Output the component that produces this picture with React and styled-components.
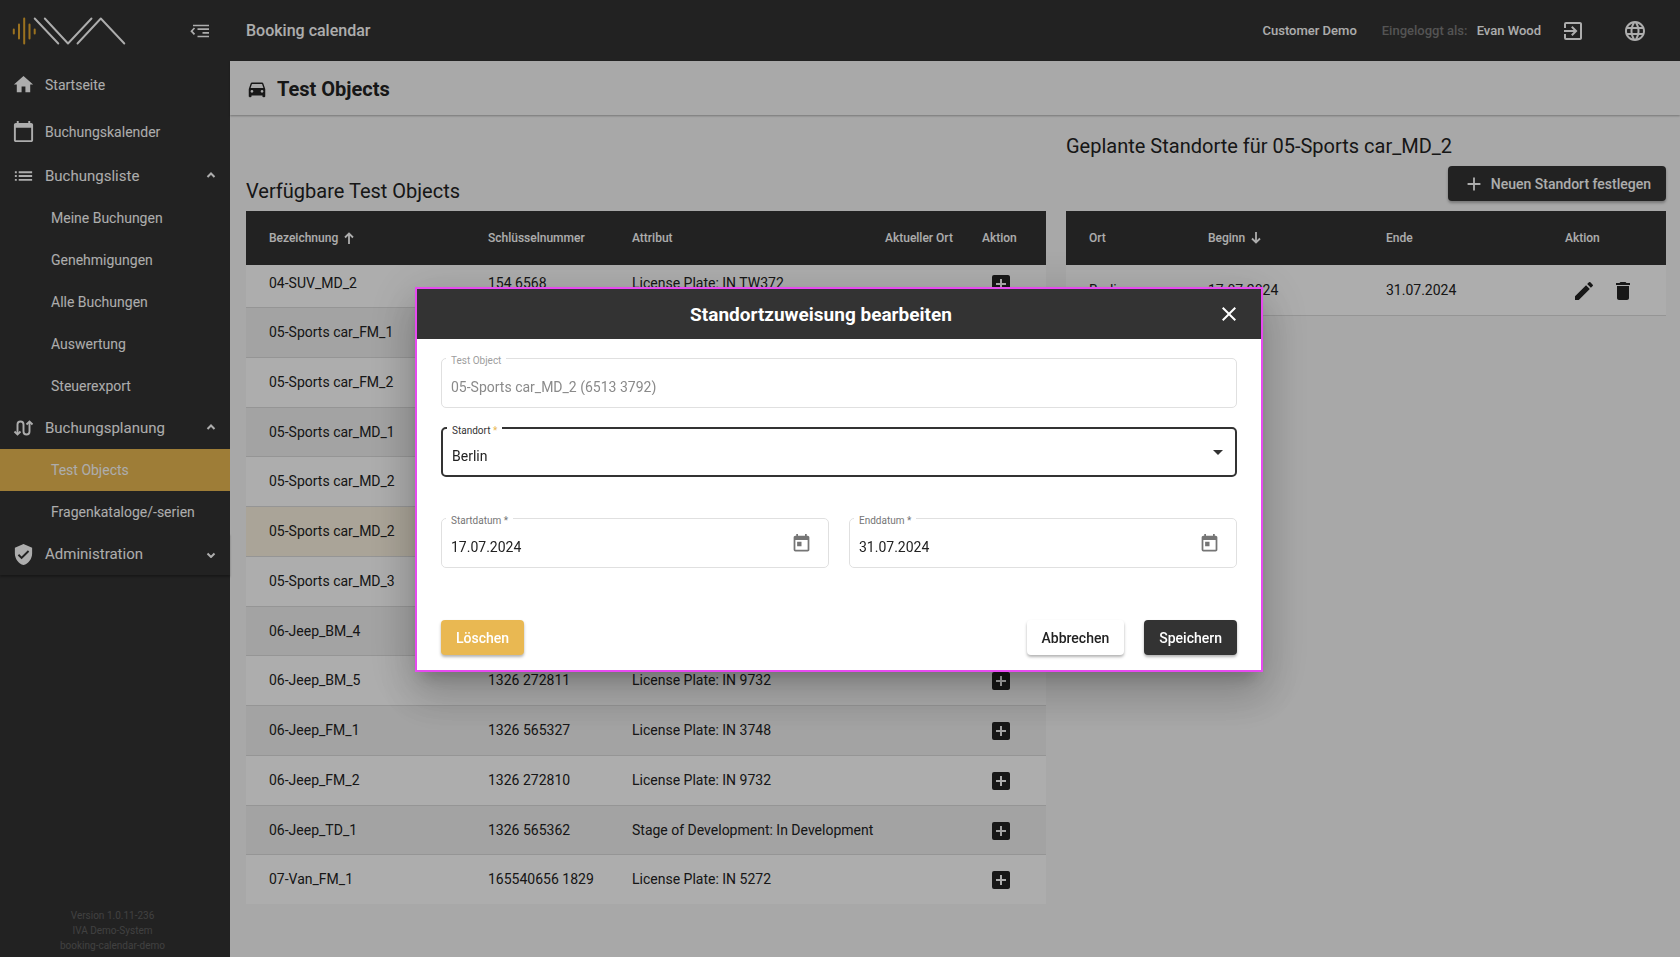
import React, { Component } from "react";
import styled, { createGlobalStyle } from "styled-components";
import {
  MdHome,
  MdCalendarToday,
  MdList,
  MdVerifiedUser,
  MdDirectionsCar,
  MdAddBox,
  MdEdit,
  MdDelete,
  MdAdd,
  MdClose,
  MdToday,
  MdExitToApp,
  MdLanguage,
} from "react-icons/md";

const testObjects = [
  { name: "04-SUV_MD_2", number: "154 6568", attribute: "License Plate: IN TW372" },
  { name: "05-Sports car_FM_1" },
  { name: "05-Sports car_FM_2" },
  { name: "05-Sports car_MD_1" },
  { name: "05-Sports car_MD_2" },
  { name: "05-Sports car_MD_2", selected: true },
  { name: "05-Sports car_MD_3" },
  { name: "06-Jeep_BM_4" },
  { name: "06-Jeep_BM_5", number: "1326 272811", attribute: "License Plate: IN 9732" },
  { name: "06-Jeep_FM_1", number: "1326 565327", attribute: "License Plate: IN 3748" },
  { name: "06-Jeep_FM_2", number: "1326 272810", attribute: "License Plate: IN 9732" },
  { name: "06-Jeep_TD_1", number: "1326 565362", attribute: "Stage of Development: In Development" },
  { name: "07-Van_FM_1", number: "165540656 1829", attribute: "License Plate: IN 5272" },
];

const bookingLinks = ["Meine Buchungen", "Genehmigungen", "Alle Buchungen", "Auswertung", "Steuerexport"];

function Logo() {
  return (
    <svg width="114" height="30" viewBox="0 0 114 30" fill="none" strokeLinecap="round">
      <g stroke="#e5a82e" strokeWidth="2">
        <path d="M1.800 13.500v4M7 8.500v14M12.200 2.500v25M17.500 8.500v14M22.700 13.500v4" />
      </g>
      <g stroke="#fff" strokeWidth="1.900" strokeLinejoin="round">
        <path d="M22.700 2.500 46.300 27.500" />
        <path d="M32.800 2.500 56 27.500 79.500 2.500" />
        <path d="M65.500 27.500 88.800 2.500 112.300 27.500" />
      </g>
    </svg>
  );
}

function CollapseIcon() {
  return (
    <svg width="20" height="14" viewBox="0 0 20 14" fill="none" stroke="currentColor" strokeWidth="1.700">
      <path d="M4.500 4 1.500 7.200l3 3.200M3 1.500h16M7.500 5.200H19M12.500 8.800H19M7.500 12.500H19" />
    </svg>
  );
}

function PlanIcon() {
  return (
    <svg width="20" height="16" viewBox="0 0 20 16" fill="none" stroke="currentColor" strokeWidth="1.900">
      <path d="M4 14V4.500a3 3 0 0 1 6 0v7a3 3 0 0 0 6 0V2" />
      <path d="M1 11.500 4 14.500l3-3M13 4.500l3-3 3 3" />
    </svg>
  );
}

function Chevron({ open }) {
  return (
    <svg width="10" height="8" viewBox="0 0 10 8" fill="none" stroke="currentColor" strokeWidth="2">
      <path d={open ? "M1.500 5 5 1.500 8.500 5" : "M1.500 3.500 5 7l3.500-3.500"} />
    </svg>
  );
}

function SortArrow({ down }) {
  return (
    <svg width="10" height="12" viewBox="0 0 10 12" fill="none" stroke="currentColor" strokeWidth="1.800">
      <path d={down ? "M5 0v10.500M1 6.500l4 4 4-4" : "M5 12V1.500M1 5.500l4-4 4 4"} />
    </svg>
  );
}

function Sidebar() {
  return (
    <SideWrapper>
      <SideTop>
        <Logo />
        <IconButton aria-label="Menü einklappen">
          <CollapseIcon />
        </IconButton>
      </SideTop>
      <MainLink href="#start">
        <MdHome size={23} />
        Startseite
      </MainLink>
      <MainLink href="#kalender">
        <MdCalendarToday size={23} />
        Buchungskalender
      </MainLink>
      <GroupButton aria-expanded="true">
        <MdList size={24} />
        <span>Buchungsliste</span>
        <Chevron open />
      </GroupButton>
      {bookingLinks.map((text) => (
        <SubLink href="#liste" key={text}>
          {text}
        </SubLink>
      ))}
      <GroupButton aria-expanded="true">
        <PlanIcon />
        <span>Buchungsplanung</span>
        <Chevron open />
      </GroupButton>
      <SubLink href="#objects" $active>
        Test Objects
      </SubLink>
      <SubLink href="#fragen">Fragenkataloge/-serien</SubLink>
      <GroupButton aria-expanded="false" $last>
        <MdVerifiedUser size={23} />
        <span>Administration</span>
        <Chevron />
      </GroupButton>
      <Version>
        Version 1.0.11-236
        <br />
        IVA Demo-System
        <br />
        booking-calendar-demo
      </Version>
    </SideWrapper>
  );
}

function Topbar() {
  return (
    <TopWrapper>
      <AppName>Booking calendar</AppName>
      <span>Customer Demo</span>
      <LoggedIn>
        <small>Eingeloggt als:</small> Evan Wood
      </LoggedIn>
      <IconButton aria-label="Abmelden">
        <MdExitToApp size={24} />
      </IconButton>
      <IconButton aria-label="Sprache">
        <MdLanguage size={24} />
      </IconButton>
    </TopWrapper>
  );
}

function ObjectsTable() {
  return (
    <Table>
      <colgroup>
        <Col $w={219} />
        <Col $w={144} />
        <Col $w={253} />
        <Col $w={97} />
        <Col $w={87} />
      </colgroup>
      <thead>
        <tr>
          <th>
            <Sort>
              Bezeichnung <SortArrow />
            </Sort>
          </th>
          <th>Schlüsselnummer</th>
          <th>Attribut</th>
          <th>Aktueller Ort</th>
          <th>Aktion</th>
        </tr>
      </thead>
      <ScrolledBody>
        {testObjects.map((item, i) => (
          <Row key={i} $selected={item.selected}>
            <td>{item.name}</td>
            <td>{item.number}</td>
            <td>{item.attribute}</td>
            <td />
            <td>
              <Actions>
                <IconButton aria-label="Standort hinzufügen">
                  <MdAddBox size={24} />
                </IconButton>
              </Actions>
            </td>
          </Row>
        ))}
      </ScrolledBody>
    </Table>
  );
}

function LocationsTable() {
  return (
    <Table>
      <colgroup>
        <Col $w={119} />
        <Col $w={178} />
        <Col $w={179} />
        <Col $w={124} />
      </colgroup>
      <thead>
        <tr>
          <th>Ort</th>
          <th>
            <Sort>
              Beginn <SortArrow down />
            </Sort>
          </th>
          <th>Ende</th>
          <th>Aktion</th>
        </tr>
      </thead>
      <tbody>
        <Row>
          <td>Berlin</td>
          <td>17.07.2024</td>
          <td>31.07.2024</td>
          <td>
            <Actions>
              <IconButton aria-label="Bearbeiten">
                <MdEdit size={24} />
              </IconButton>
              <IconButton aria-label="Löschen">
                <MdDelete size={24} />
              </IconButton>
            </Actions>
          </td>
        </Row>
      </tbody>
    </Table>
  );
}

function EditDialog() {
  return (
    <Backdrop>
      <Dialog role="dialog" aria-modal="true" aria-labelledby="dialog-title">
        <DialogHeader>
          <h2 id="dialog-title">Standortzuweisung bearbeiten</h2>
          <IconButton aria-label="Schließen">
            <MdClose size={24} />
          </IconButton>
        </DialogHeader>
        <Form>
          <Field $disabled>
            <label htmlFor="object">Test Object</label>
            <input id="object" defaultValue="05-Sports car_MD_2 (6513 3792)" disabled />
          </Field>
          <Field $focused>
            <label htmlFor="place">
              Standort <i>*</i>
            </label>
            <select id="place" defaultValue="Berlin">
              <option>Berlin</option>
            </select>
            <Caret />
          </Field>
          <Dates>
            <Field>
              <label htmlFor="start">Startdatum *</label>
              <input id="start" defaultValue="17.07.2024" />
              <IconButton type="button" aria-label="Startdatum wählen">
                <MdToday size={21} />
              </IconButton>
            </Field>
            <Field>
              <label htmlFor="end">Enddatum *</label>
              <input id="end" defaultValue="31.07.2024" />
              <IconButton type="button" aria-label="Enddatum wählen">
                <MdToday size={21} />
              </IconButton>
            </Field>
          </Dates>
          <Buttons>
            <Button type="button" $bg="#e9b852" $color="#fff">
              Löschen
            </Button>
            <Button type="button" $bg="#fff" $color="#222">
              Abbrechen
            </Button>
            <Button type="button" $bg="#333" $color="#fff">
              Speichern
            </Button>
          </Buttons>
        </Form>
      </Dialog>
    </Backdrop>
  );
}

export default class App extends Component {
  render() {
    return (
      <>
        <GlobalStyle />
        <Page>
          <Sidebar />
          <Main>
            <Topbar />
            <PageTitle>
              <MdDirectionsCar size={22} />
              Test Objects
            </PageTitle>
            <Content>
              <Column $grow={4}>
                <TableTop $end>
                  <h2>Verfügbare Test Objects</h2>
                </TableTop>
                <ObjectsTable />
              </Column>
              <Column $grow={3}>
                <TableTop>
                  <h2>Geplante Standorte für 05-Sports car_MD_2</h2>
                  <Button $bg="#333" $color="#fff">
                    <MdAdd size={22} />
                    Neuen Standort festlegen
                  </Button>
                </TableTop>
                <LocationsTable />
              </Column>
            </Content>
          </Main>
        </Page>
        <EditDialog />
      </>
    );
  }
}

const GlobalStyle = createGlobalStyle`
    * {
        box-sizing: border-box;
    }
    body {
        margin: 0;
        font-family: Roboto, "Liberation Sans", sans-serif;
        font-size: 14px;
        color: #222;
        background: #f8f8f8;
    }
    button, input, select {
        font: inherit;
    }
    svg {
        flex: none;
    }
`;

const Page = styled.div`
    display: flex;
    min-height: 100vh;
`;

const SideWrapper = styled.nav`
    display: flex;
    flex-direction: column;
    flex: none;
    width: 230px;
    color: #fff;
    background: #333;
`;

const SideTop = styled.div`
    display: flex;
    align-items: center;
    justify-content: space-between;
    height: 61px;
    padding: 0 20px 0 12px;
`;

const IconButton = styled.button`
    display: flex;
    padding: 0;
    border: 0;
    color: inherit;
    background: none;
    cursor: pointer;
`;

const MainLink = styled.a`
    display: flex;
    align-items: center;
    gap: 10px;
    height: 47px;
    padding: 0 12px;
    color: #fff;
    text-decoration: none;
`;

const GroupButton = styled.button`
    display: flex;
    align-items: center;
    gap: 10px;
    height: 42px;
    padding: 0 14px 0 12px;
    border: 0;
    font-size: 15px;
    text-align: left;
    color: #fff;
    background: #333;
    box-shadow: ${(props) => (props.$last ? "0 2px 2px rgba(0,0,0,0.3)" : "none")};
    > svg:first-child {
        width: 23px;
    }
    span {
        flex: 1;
    }
`;

const SubLink = styled.a`
    display: flex;
    align-items: center;
    height: 42px;
    padding-left: 51px;
    color: #fff;
    background: ${(props) => (props.$active ? "#e9b852" : "none")};
    text-decoration: none;
`;

const Version = styled.p`
    margin: auto 5px 4px 0;
    font-size: 10px;
    line-height: 15px;
    text-align: center;
    color: #606060;
`;

const Main = styled.main`
    flex: 1;
    min-width: 0;
`;

const TopWrapper = styled.header`
    display: flex;
    align-items: center;
    height: 61px;
    padding: 0 33px 0 16px;
    font-size: 13px;
    font-weight: 500;
    color: #fff;
    background: #333;
    button + button {
        margin-left: 38px;
    }
`;

const AppName = styled.h1`
    flex: 1;
    margin: 0;
    font-size: 16px;
    font-weight: 500;
`;

const LoggedIn = styled.span`
    margin: 0 20px 0 25px;
    small {
        margin-right: 6px;
        font-size: 13px;
        color: #7c7c7c;
    }
`;

const PageTitle = styled.h2`
    display: flex;
    align-items: center;
    gap: 9px;
    height: 54px;
    margin: 0;
    padding: 2px 16px 0;
    font-size: 20px;
    font-weight: 700;
    background: #fafafa;
    box-shadow: 0 1px 2px rgba(0,0,0,0.3);
`;

const Content = styled.div`
    display: flex;
    align-items: flex-start;
    gap: 20px;
    padding: 16px 14px 16px 16px;
`;

const Column = styled.section`
    flex: ${(props) => props.$grow} 1 0;
    min-width: 0;
`;

const TableTop = styled.div`
    display: flex;
    flex-direction: column;
    justify-content: ${(props) => (props.$end ? "flex-end" : "space-between")};
    height: 80px;
    padding-bottom: ${(props) => (props.$end ? "5px" : "10px")};
    h2 {
        margin: 0;
        font-size: 20px;
        font-weight: 400;
        line-height: 30px;
    }
    button {
        align-self: flex-end;
    }
`;

const Table = styled.table`
    width: 100%;
    table-layout: fixed;
    border-collapse: collapse;
    th {
        height: 54px;
        padding: 0 0 0 23px;
        font-size: 12px;
        font-weight: 500;
        text-align: left;
        white-space: nowrap;
        color: #fff;
        background: #333;
    }
    td {
        padding: 0 0 0 23px;
        border-bottom: 1px solid #dcdcdc;
        white-space: nowrap;
    }
`;

const Col = styled.col`
    width: ${(props) => props.$w}px;
`;

const Sort = styled.span`
    display: flex;
    align-items: center;
    gap: 6px;
`;

const Row = styled.tr`
    height: 50px;
    background: ${(props) => (props.$selected ? "#fbf2e0" : "#fff")};
    &:nth-child(even) {
        background: ${(props) => (props.$selected ? "#fbf2e0" : "#f0f0f0")};
    }
`;

const ScrolledBody = styled.tbody`
    tr:first-child {
        height: 42px;
    }
    tr:first-child td {
        padding-bottom: 6px;
    }
    tr:nth-child(4n) {
        height: 49px;
    }
    tr:last-child td {
        border-bottom: 0;
    }
`;

const Actions = styled.div`
    display: flex;
    gap: 15px;
    padding: 2px 0 0 7px;
`;

const Button = styled.button`
    display: flex;
    align-items: center;
    gap: 6px;
    height: 35px;
    padding: 0 15px;
    border: 0;
    border-radius: 4px;
    font-weight: 500;
    color: ${(props) => props.$color};
    background: ${(props) => props.$bg};
    box-shadow: 0 2px 3px rgba(0,0,0,0.3);
    cursor: pointer;
`;

const Backdrop = styled.div`
    position: fixed;
    inset: 0;
    display: flex;
    align-items: center;
    justify-content: center;
    padding: 2px 2px 0 0;
    background: rgba(0,0,0,0.32);
`;

const Dialog = styled.div`
    width: 848px;
    max-width: 90vw;
    border: 2px solid #e64af0;
    background: #fff;
    box-shadow: 0 11px 15px -7px rgba(0,0,0,0.2), 0 24px 38px 3px rgba(0,0,0,0.14), 0 9px 46px 8px rgba(0,0,0,0.12);
`;

const DialogHeader = styled.header`
    display: flex;
    align-items: center;
    height: 50px;
    padding: 0 20px 0 8px;
    color: #fff;
    background: #333;
    h2 {
        flex: 1;
        margin: 0;
        font-size: 19px;
        font-weight: 700;
        text-align: center;
    }
`;

const Form = styled.form`
    display: flex;
    flex-direction: column;
    gap: 19px;
    padding: 19px 24px 15px;
`;

const Field = styled.div`
    position: relative;
    display: flex;
    align-items: center;
    flex: 1;
    border: ${(props) => (props.$focused ? "2px solid #333" : "1px solid #e0e0e0")};
    border-radius: 5px;
    padding-right: ${(props) => (props.$focused ? "12px" : "16px")};
    label {
        position: absolute;
        top: -5px;
        left: 4px;
        padding: 0 5px;
        font-size: 10px;
        line-height: 14px;
        color: ${(props) => (props.$disabled ? "#9e9e9e" : props.$focused ? "#333" : "#757575")};
        background: #fff;
    }
    label i {
        font-style: normal;
        color: #e9b852;
    }
    input, select {
        flex: 1;
        min-width: 0;
        height: ${(props) => (props.$focused ? "46px" : "48px")};
        padding: 8px 0 0 9px;
        border: 0;
        outline: none;
        appearance: none;
        color: ${(props) => (props.$disabled ? "#8a8a8a" : "#222")};
        background: none;
    }
    button {
        color: #757575;
    }
`;

const Caret = styled.span`
    border: 5px solid transparent;
    border-top-color: #333;
    border-bottom: 0;
`;

const Dates = styled.div`
    display: flex;
    gap: 20px;
    margin-top: 22px;
`;

const Buttons = styled.div`
    display: flex;
    gap: 20px;
    margin-top: 33px;
    button:first-child {
        margin-right: auto;
    }
`;
